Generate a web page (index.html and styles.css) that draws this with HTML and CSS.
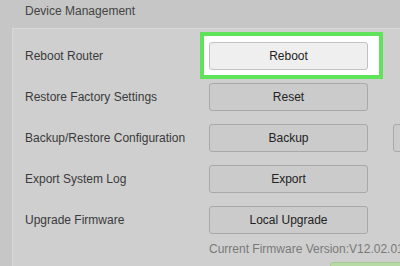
FILE: index.html
```html
<!DOCTYPE html>
<html lang="en">
  <head>
    <meta charset="UTF-8" />
    <meta name="viewport" content="width=device-width, initial-scale=1.0" />
    <title>Device Management</title>
    <link rel="stylesheet" href="styles.css">
  </head>
  <body>
    <div class="page">
      <h1 class="title">Device Management</h1>

      <div class="panel">
        <div class="row">
          <span class="label">Reboot Router</span>
          <div class="highlight">
            <button class="btn btn-light">Reboot</button>
          </div>
        </div>

        <div class="row">
          <span class="label">Restore Factory Settings</span>
          <button class="btn">Reset</button>
        </div>

        <div class="row">
          <span class="label">Backup/Restore Configuration</span>
          <button class="btn">Backup</button>
          <button class="btn">Restore</button>
        </div>

        <div class="row">
          <span class="label">Export System Log</span>
          <button class="btn">Export</button>
        </div>

        <div class="row">
          <span class="label">Upgrade Firmware</span>
          <button class="btn">Local Upgrade</button>
        </div>

        <div class="version">Current Firmware Version:V12.02.01</div>

        <div class="actions">
          <button class="btn btn-save">Save</button>
        </div>
      </div>
    </div>
  </body>
</html>
```

FILE: styles.css
```css
* {
  margin: 0;
  padding: 0;
  box-sizing: border-box;
}

html,
body {
  overflow: hidden;
}

body {
  font-family: "Liberation Sans", Arial, sans-serif;
  font-size: 12px;
  color: #3a3a3a;
  background: #c6c6c6;
  height: 266px;
}

.page {
  width: 560px;
}

.title {
  font-size: 12px;
  font-weight: normal;
  color: #444;
  line-height: 18px;
  height: 28px;
  padding: 2px 0 0 25px;
}

.panel {
  margin-left: 12px;
  background: #cfcfcf;
  border-top: 1px solid #d8d8d8;
  border-left: 1px solid #d8d8d8;
  padding: 6px 0 0 12px;
  height: 300px;
}

.row {
  display: flex;
  align-items: center;
  height: 41px;
}

.label {
  width: 184px;
  line-height: 14px;
  flex-shrink: 0;
}

.btn {
  width: 159px;
  height: 28px;
  flex-shrink: 0;
  font-family: "Liberation Sans", Arial, sans-serif;
  font-size: 12px;
  color: #222;
  background: #cbcbcb;
  border: 1px solid #a9a9a9;
  border-radius: 3px;
}

.btn + .btn {
  margin-left: 25px;
}

.btn-light {
  background: #efefef;
  border-color: #c2c2c2;
}

.highlight {
  position: relative;
  z-index: 0;
  display: flex;
}

.highlight::before {
  content: "";
  position: absolute;
  top: -10px;
  bottom: -9px;
  left: -9px;
  right: -15px;
  background: #ffffff;
  border: 4px solid #5ee35b;
  z-index: -1;
}

.version {
  margin: 2px 0 0 184px;
  line-height: 14px;
  color: #7a7a7a;
}

.actions {
  margin: 6px 0 0 305px;
}

.btn-save {
  background: #b7d9a3;
  border-color: #a6c993;
}
```
